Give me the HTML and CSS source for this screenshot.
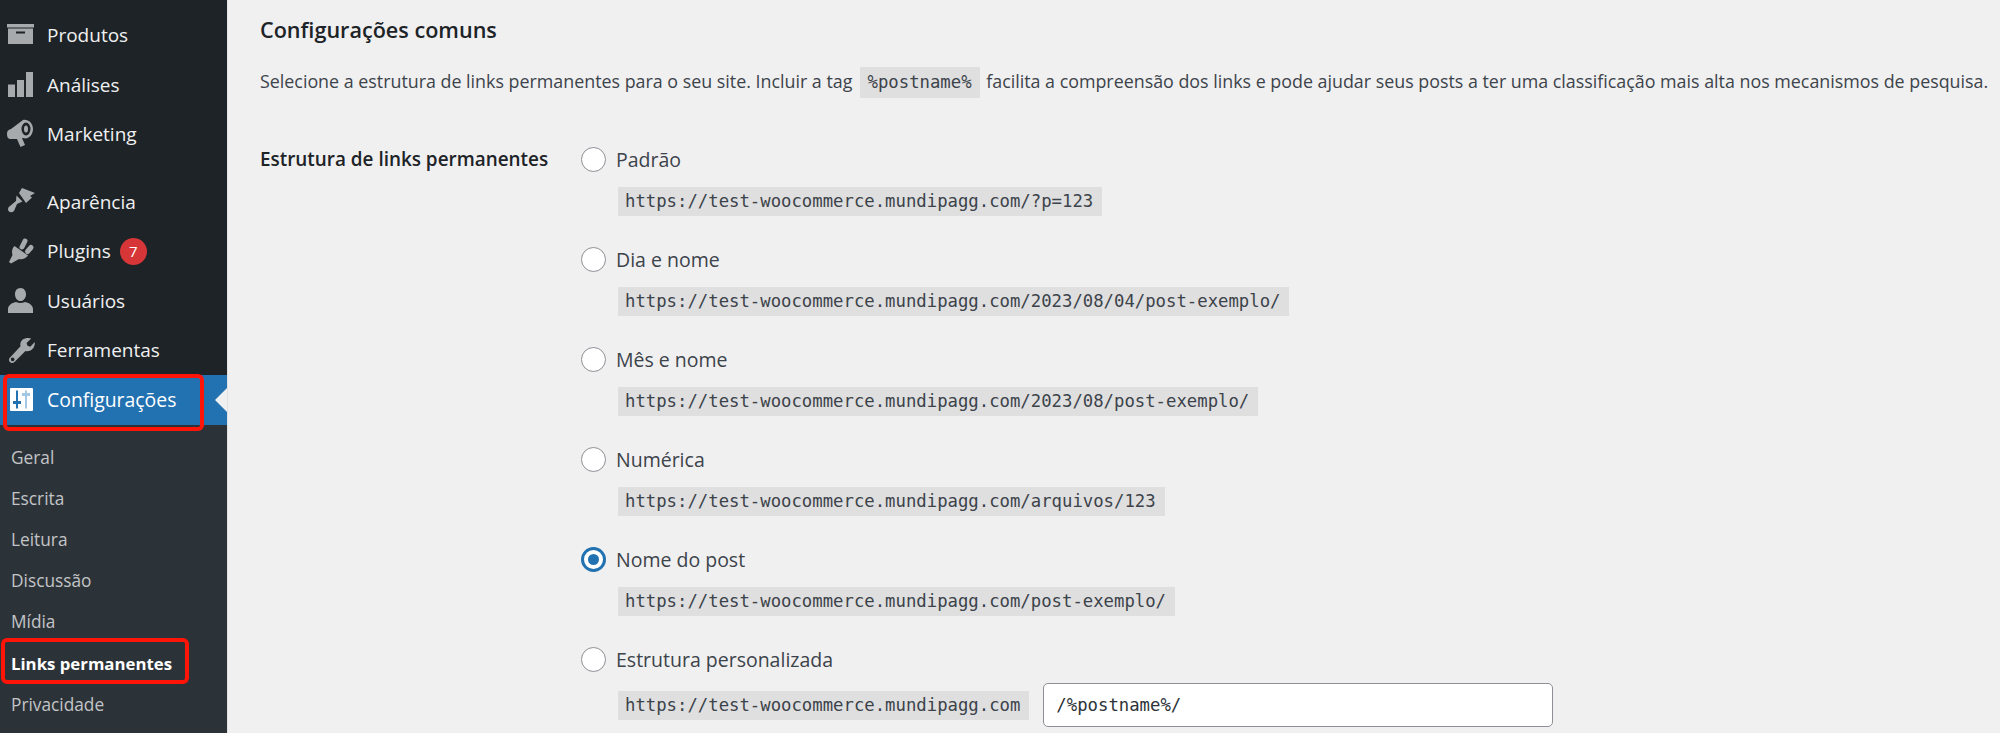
FILE: index.html
```html
<!DOCTYPE html>
<html lang="pt-BR">
<head>
<meta charset="utf-8">
<title>Links permanentes</title>
<link rel="stylesheet" href="styles.css">
</head>
<body>
<div class="page">
  <nav class="sidebar">
    <ul class="menu">
      <li class="item"><svg class="icon" viewBox="0 0 26 26"><path fill-rule="evenodd" d="M-1 2h27v3.500H-1zM0 6.500h25V22H0zM8 9.500v2h9v-2z"/></svg><span>Produtos</span></li>
      <li class="item"><svg class="icon" viewBox="0 0 26 26"><path d="M0 12.500h7V25H0zM9 8h7v17H9zM18 0h7v25h-7z"/></svg><span>Análises</span></li>
      <li class="item"><svg class="icon" viewBox="0 0 26 26"><path fill-rule="evenodd" d="M-1 13C-1 10 0 9 3 8L15-1C20-2 25 2 25 8C25 14 20 19 15 17L14 17 17 24 12.500 26 9 18 3 18C0 18-1 16-1 13zM18 1.500a4.500 6.500 0 1 0 0 13 4.500 6.500 0 1 0 0-13zM18 4.500a2 3.500 0 1 1 0 7 2 3.500 0 1 1 0-7z"/></svg><span>Marketing</span></li>
      <li class="sep"></li>
      <li class="item"><svg class="icon" viewBox="0 0 26 26"><path d="M8.500 6.500L14.500 12.500 9 15 6 22Q3 24.500 .5 22-1 19 2 17L8 12zM11 4L14-1 27 4 22 7 24 8.500 18 14z"/></svg><span>Aparência</span></li>
      <li class="item"><svg class="icon" viewBox="0 0 26 26"><path d="M6.500 8L20 17.500C18 20.500 14 22 11 21L3 25.500 1 24 4.500 17C3.500 14 4 10 6.500 8z"/><path class="prong" d="M14 9L17 3M19.500 13.500L23 9.500"/></svg><span>Plugins</span><span class="badge">7</span></li>
      <li class="item"><svg class="icon" viewBox="0 0 26 26"><path d="M12.500 0c3.500 0 5.500 3 5.500 6.200S16 13 12.500 13 7 9.500 7 6.200 9 0 12.500 0zM8 14c3 1.400 6 1.400 9 0 5 1 8 4 8 7v4H0v-4c0-3 3-6 8-7z"/></svg><span>Usuários</span></li>
      <li class="item"><svg class="icon" viewBox="0 0 28 28"><path fill-rule="evenodd" d="M22 1c1 0 2 .2 3 .6L20 6.500l1 3 3 1 4.800-5c.4 3-.6 6-3 8-2 1.700-4.600 2.200-7 1.500L7 27c-1.500 1.300-3.800 1.300-5-.2-1.300-1.400-1.200-3.500.2-4.800L13.500 10c-.7-2.500 0-5.200 2-7 1.700-1.500 4-2 6.500-2zM5 22a2 2 0 1 0 0 4 2 2 0 0 0 0-4z"/></svg><span>Ferramentas</span></li>
      <li class="item current">
        <svg class="icon" viewBox="0 0 26 26"><path d="M3 1h21a1 1 0 0 1 1 1v21a1 1 0 0 1-1 1H3a1 1 0 0 1-1-1V2a1 1 0 0 1 1-1z"/><path class="ink" d="M8 3.500h2V14h3v3h-3v4.500H8V17H5v-3h3z"/><path class="ink-light" d="M17 3.500h2V6h3v3h-3v12.500h-2V9h-3V6h3z"/></svg><span class="current-label">Configurações</span>
      </li>
    </ul>
    <ul class="submenu">
      <li>Geral</li>
      <li>Escrita</li>
      <li>Leitura</li>
      <li>Discussão</li>
      <li>Mídia</li>
      <li class="active">Links permanentes</li>
      <li>Privacidade</li>
    </ul>
  </nav>
  <main class="content">
    <h2 class="title">Configurações comuns</h2>
    <p class="intro">Selecione a estrutura de links permanentes para o seu site. Incluir a tag <code class="tag">%postname%</code> facilita a compreensão dos links e pode ajudar seus posts a ter uma classificação mais alta nos mecanismos de pesquisa.</p>
    <div class="form">
      <div class="form-label">Estrutura de links permanentes</div>
      <div class="options">
        <div class="option">
          <label class="choice"><input type="radio" name="p"><span>Padrão</span></label>
          <code class="url">https://test-woocommerce.mundipagg.com/?p=123</code>
        </div>
        <div class="option">
          <label class="choice"><input type="radio" name="p"><span>Dia e nome</span></label>
          <code class="url">https://test-woocommerce.mundipagg.com/2023/08/04/post-exemplo/</code>
        </div>
        <div class="option">
          <label class="choice"><input type="radio" name="p"><span>Mês e nome</span></label>
          <code class="url">https://test-woocommerce.mundipagg.com/2023/08/post-exemplo/</code>
        </div>
        <div class="option">
          <label class="choice"><input type="radio" name="p"><span>Numérica</span></label>
          <code class="url">https://test-woocommerce.mundipagg.com/arquivos/123</code>
        </div>
        <div class="option">
          <label class="choice"><input type="radio" name="p" checked><span>Nome do post</span></label>
          <code class="url">https://test-woocommerce.mundipagg.com/post-exemplo/</code>
        </div>
        <div class="option">
          <label class="choice"><input type="radio" name="p"><span>Estrutura personalizada</span></label>
          <div class="custom">
            <code class="url">https://test-woocommerce.mundipagg.com</code>
            <input class="text" type="text" value="/%postname%/">
          </div>
        </div>
      </div>
    </div>
  </main>
</div>
<div class="mark mark-settings"></div>
<div class="mark mark-links"></div>
</body>
</html>
```
FILE: styles.css
```css
* { box-sizing: border-box; }
html, body { margin: 0; height: 733px; overflow: hidden; }
body {
  position: relative;
  background: #f0f0f1;
  color: #3c434a;
  font-family: "Open Sans", "Noto Sans", sans-serif;
}
ul { list-style: none; margin: 0; padding: 0; }
.page { display: flex; height: 733px; }

.sidebar {
  flex: 0 0 228px;
  background: #1d2327;
  border-right: 1px solid #e2e2e3;
  padding-top: 10.5px;
}
.item {
  position: relative;
  display: flex;
  align-items: center;
  height: 49.5px;
  padding-left: 8px;
  color: #f0f0f1;
  font-size: 19px;
}
.icon { width: 26px; height: 26px; margin-right: 13px; fill: #a7aaad; flex: none; overflow: visible; }
.prong { fill: none; stroke: #a7aaad; stroke-width: 5; stroke-linecap: round; }
.ink { fill: #2271b1; }
.ink-light { fill: #a3c8e3; }
.sep { height: 18px; }
.badge {
  display: inline-flex;
  align-items: center;
  justify-content: center;
  width: 27px;
  height: 27px;
  margin-left: 9px;
  border-radius: 50%;
  background: #d63638;
  color: #fff;
  font-size: 15px;
}
.current { background: #2271b1; color: #fff; }
.current .icon { fill: #fff; }
.current-label { font-size: 19.4px; }
.current::after {
  content: "";
  position: absolute;
  right: 0;
  top: 13px;
  border: 12px solid transparent;
  border-left-width: 0;
  border-right-color: #f0f0f1;
}
.submenu { background: #2c3338; padding-top: 12px; height: 320px; }
.submenu li {
  display: flex;
  align-items: center;
  height: 41.2px;
  padding-left: 11px;
  font-size: 17.3px;
  color: #c3c4c7;
}
.submenu .active { color: #fff; font-size: 16.8px; font-weight: 700; }

.content { flex: 1; min-width: 0; padding: 14px 0 0 32px; overflow: hidden; }
.title { margin: 0; font-size: 21.6px; line-height: 32px; font-weight: 600; color: #1d2327; }
.intro { margin: 20px 0 0; font-size: 17.85px; line-height: 31px; white-space: nowrap; }
.tag, .url {
  background: #dfdfe0;
  font-family: "DejaVu Sans Mono", "Liberation Mono", monospace;
  color: #3c434a;
}
.tag { display: inline-block; padding: 0 8px; margin: 0 2px 0 2.5px; font-size: 17.3px; line-height: 31px; }
.form { display: flex; margin-top: 46px; }
.form-label { flex: 0 0 321px; font-size: 18.9px; line-height: 30px; font-weight: 600; color: #1d2327; }
.options { display: flex; flex-direction: column; }
.option { height: 100px; }
.choice { display: flex; align-items: center; height: 30px; gap: 10px; font-size: 19.5px; }
.choice input {
  appearance: none;
  width: 25px;
  height: 25px;
  margin: 0;
  background: #fff;
  border: 1px solid #8c8f94;
  border-radius: 50%;
  position: relative;
}
.choice input:checked { border: 3px solid #2271b1; }
.choice input:checked::before {
  content: "";
  position: absolute;
  inset: 4px;
  border-radius: 50%;
  background: #2271b1;
}
.url {
  display: inline-block;
  margin: 13px 0 0 37px;
  padding: 0 9px 0 7px;
  height: 29px;
  line-height: 29px;
  font-size: 17.3px;
}
.custom { display: flex; align-items: center; gap: 14px; margin-top: 9px; }
.custom .url { margin-top: 0; }
.text {
  width: 510px;
  height: 44px;
  padding: 0 12px;
  background: #fff;
  border: 1px solid #8c8f94;
  border-radius: 5px;
  color: #2c3338;
  font-family: "DejaVu Sans Mono", monospace;
  font-size: 17.3px;
}

.mark { position: absolute; border: 4px solid #ff1408; border-radius: 6px; }
.mark-settings { left: 3px; top: 374px; width: 201px; height: 57px; }
.mark-links { left: 1px; top: 638px; width: 188px; height: 46px; }
```
